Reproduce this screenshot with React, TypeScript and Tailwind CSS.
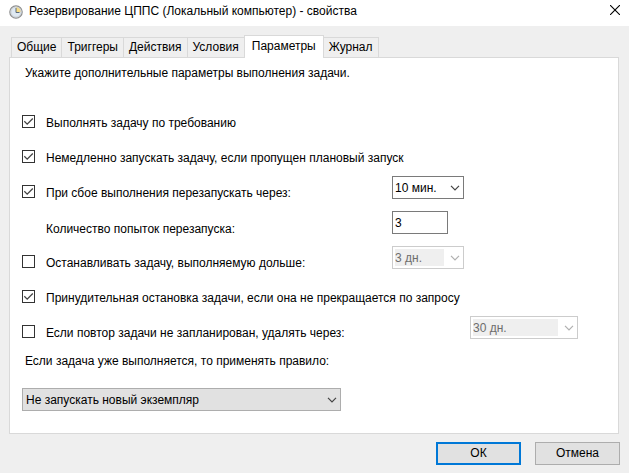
import { useState } from "react";
import type { ReactNode } from "react";
import clsx from "clsx";

const tabs = ["Общие", "Триггеры", "Действия", "Условия", "Параметры", "Журнал"];

function ClockIcon() {
  return (
    <svg width="14" height="14" viewBox="0 0 14 14" aria-hidden="true">
      <circle cx="7" cy="7" r="6.2" fill="#dfe9f2" stroke="#8f8f8f" strokeWidth="1.2" />
      <path d="M7 7V2a5 5 0 0 1 5 5z" fill="#f7dc86" />
      <circle cx="7" cy="7" r="5" fill="none" stroke="#c9cdd2" strokeWidth="0.8" />
      <path d="M7 3v4.5h3.5" fill="none" stroke="#5b6b7c" strokeWidth="1" />
    </svg>
  );
}

function CloseIcon() {
  return (
    <svg width="10" height="10" viewBox="0 0 10 10" aria-hidden="true">
      <path d="M0 0l10 10M10 0L0 10" stroke="#000" strokeWidth="1.1" />
    </svg>
  );
}

function Check({
  id,
  defaultChecked,
  children,
  className,
}: {
  id: string;
  defaultChecked?: boolean;
  children: ReactNode;
  className?: string;
}) {
  return (
    <div className={clsx("flex h-[15px] items-center gap-[11px]", className)}>
      <span className="relative size-[13px] shrink-0">
        <input
          id={id}
          type="checkbox"
          defaultChecked={defaultChecked}
          className="peer block size-[13px] appearance-none border border-[#333] bg-white"
        />
        <svg
          className="pointer-events-none absolute inset-0 hidden peer-checked:block"
          width="13"
          height="13"
          viewBox="0 0 13 13"
          aria-hidden="true"
        >
          <path d="M2.3 6.3l2.9 2.9 5.6-5.7" fill="none" stroke="#444" strokeWidth="1.3" />
        </svg>
      </span>
      <label htmlFor={id} className="pt-[3px] whitespace-nowrap">
        {children}
      </label>
    </div>
  );
}

function Select({
  label,
  options,
  disabled,
  filled,
  className,
}: {
  label: string;
  options: string[];
  disabled?: boolean;
  filled?: boolean;
  className?: string;
}) {
  return (
    <div className={clsx("relative", className)}>
      <select
        aria-label={label}
        disabled={disabled}
        className={clsx(
          "block h-[23px] w-full appearance-none border py-0.5 pr-[19px] leading-4 opacity-100",
          disabled && "border-[#ccc] bg-[#efefef] bg-clip-content pl-0.5 text-[#6d6d6d]",
          filled && "border-[#adadad] bg-[#e1e1e1] pl-[3px]",
          !disabled && !filled && "border-[#7a7a7a] bg-white pl-0.5"
        )}
      >
        {options.map((o) => (
          <option key={o}>{o}</option>
        ))}
      </select>
      <svg
        className="pointer-events-none absolute top-[9px] right-1"
        width="10"
        height="6"
        viewBox="0 0 10 6"
        aria-hidden="true"
      >
        <path
          d="M1 0.8l4 4 4-4"
          fill="none"
          stroke={disabled ? "#b0b0b0" : "#444"}
          strokeWidth="1.2"
        />
      </svg>
    </div>
  );
}

export default function App() {
  const [active, setActive] = useState("Параметры");

  return (
    <div className="flex min-h-screen flex-col bg-[#efefef] font-['Liberation_Sans',Arial,sans-serif] text-[12px] leading-[15px] text-black">
      <header className="flex h-[26px] items-center justify-between bg-white pr-[9px] pb-[3px] pl-[9px]">
        <div className="flex items-center gap-1.5">
          <ClockIcon />
          <h1>Резервирование ЦППС (Локальный компьютер) - свойства</h1>
        </div>
        <button aria-label="Закрыть" className="pb-[3px]">
          <CloseIcon />
        </button>
      </header>

      <main className="flex flex-1 flex-col pt-[9px] pr-[9px] pb-2 pl-[9px]">
        <div role="tablist" className="flex items-end pl-0.5">
          {tabs.map((t) => (
            <button
              key={t}
              role="tab"
              aria-selected={t === active}
              onClick={() => setActive(t)}
              className={clsx(
                "border-t border-r border-[#d9d9d9] whitespace-nowrap first:border-l",
                t === active
                  ? "relative -mb-px -ml-px h-[23px] border-l bg-white px-[7px] pb-px"
                  : "h-5 px-[5px]"
              )}
            >
              {t}
            </button>
          ))}
        </div>

        <section
          role="tabpanel"
          className="mr-px flex-1 border border-[#d9d9d9] bg-white pr-3 pb-[22px] pl-3"
        >
          <p className="pt-2 pl-[3px]">
            Укажите дополнительные параметры выполнения задачи.
          </p>

          <div className="mt-[25px] flex flex-col gap-3">
            <div className="flex h-[23px] items-end">
              <Check id="demand" defaultChecked>
                Выполнять задачу по требованию
              </Check>
            </div>
            <div className="flex h-[23px] items-end">
              <Check id="missed" defaultChecked>
                Немедленно запускать задачу, если пропущен плановый запуск
              </Check>
            </div>
            <div className="flex h-[23px] items-end">
              <Check id="restart" defaultChecked className="w-[370px]">
                При сбое выполнения перезапускать через:
              </Check>
              <Select
                label="Интервал перезапуска"
                options={["10 мин.", "15 мин.", "30 мин."]}
                className="w-[72px]"
              />
            </div>
            <div className="flex h-[23px] items-end">
              <label htmlFor="attempts" className="h-[15px] w-[370px] pt-[3px] pl-6">
                Количество попыток перезапуска:
              </label>
              <input
                id="attempts"
                type="text"
                defaultValue="3"
                className="h-[23px] w-14 border border-[#7a7a7a] bg-white px-0.5"
              />
            </div>
            <div className="flex h-[23px] items-end">
              <Check id="stop" className="w-[370px]">
                Останавливать задачу, выполняемую дольше:
              </Check>
              <Select label="Срок выполнения" options={["3 дн."]} disabled className="w-[72px]" />
            </div>
            <div className="flex h-[23px] items-end">
              <Check id="force" defaultChecked>
                Принудительная остановка задачи, если она не прекращается по запросу
              </Check>
            </div>
            <div className="flex h-[23px] items-end">
              <Check id="remove" className="w-[448px]">
                Если повтор задачи не запланирован, удалять через:
              </Check>
              <Select label="Срок удаления" options={["30 дн."]} disabled className="w-[108px]" />
            </div>
          </div>

          <p className="mt-[15px] pl-[3px]">Если задача уже выполняется, то применять правило:</p>
          <Select
            label="Правило"
            options={["Не запускать новый экземпляр", "Запускать новый экземпляр параллельно"]}
            filled
            className="mt-[19px] w-[319px]"
          />
        </section>

        <footer className="mt-2 flex justify-end gap-[14px]">
          <button className="h-[23px] w-[85px] border-2 border-[#0078d7] bg-[#e1e1e1]">ОК</button>
          <button className="h-[23px] w-[85px] border border-[#adadad] bg-[#e1e1e1]">
            Отмена
          </button>
        </footer>
      </main>
    </div>
  );
}
